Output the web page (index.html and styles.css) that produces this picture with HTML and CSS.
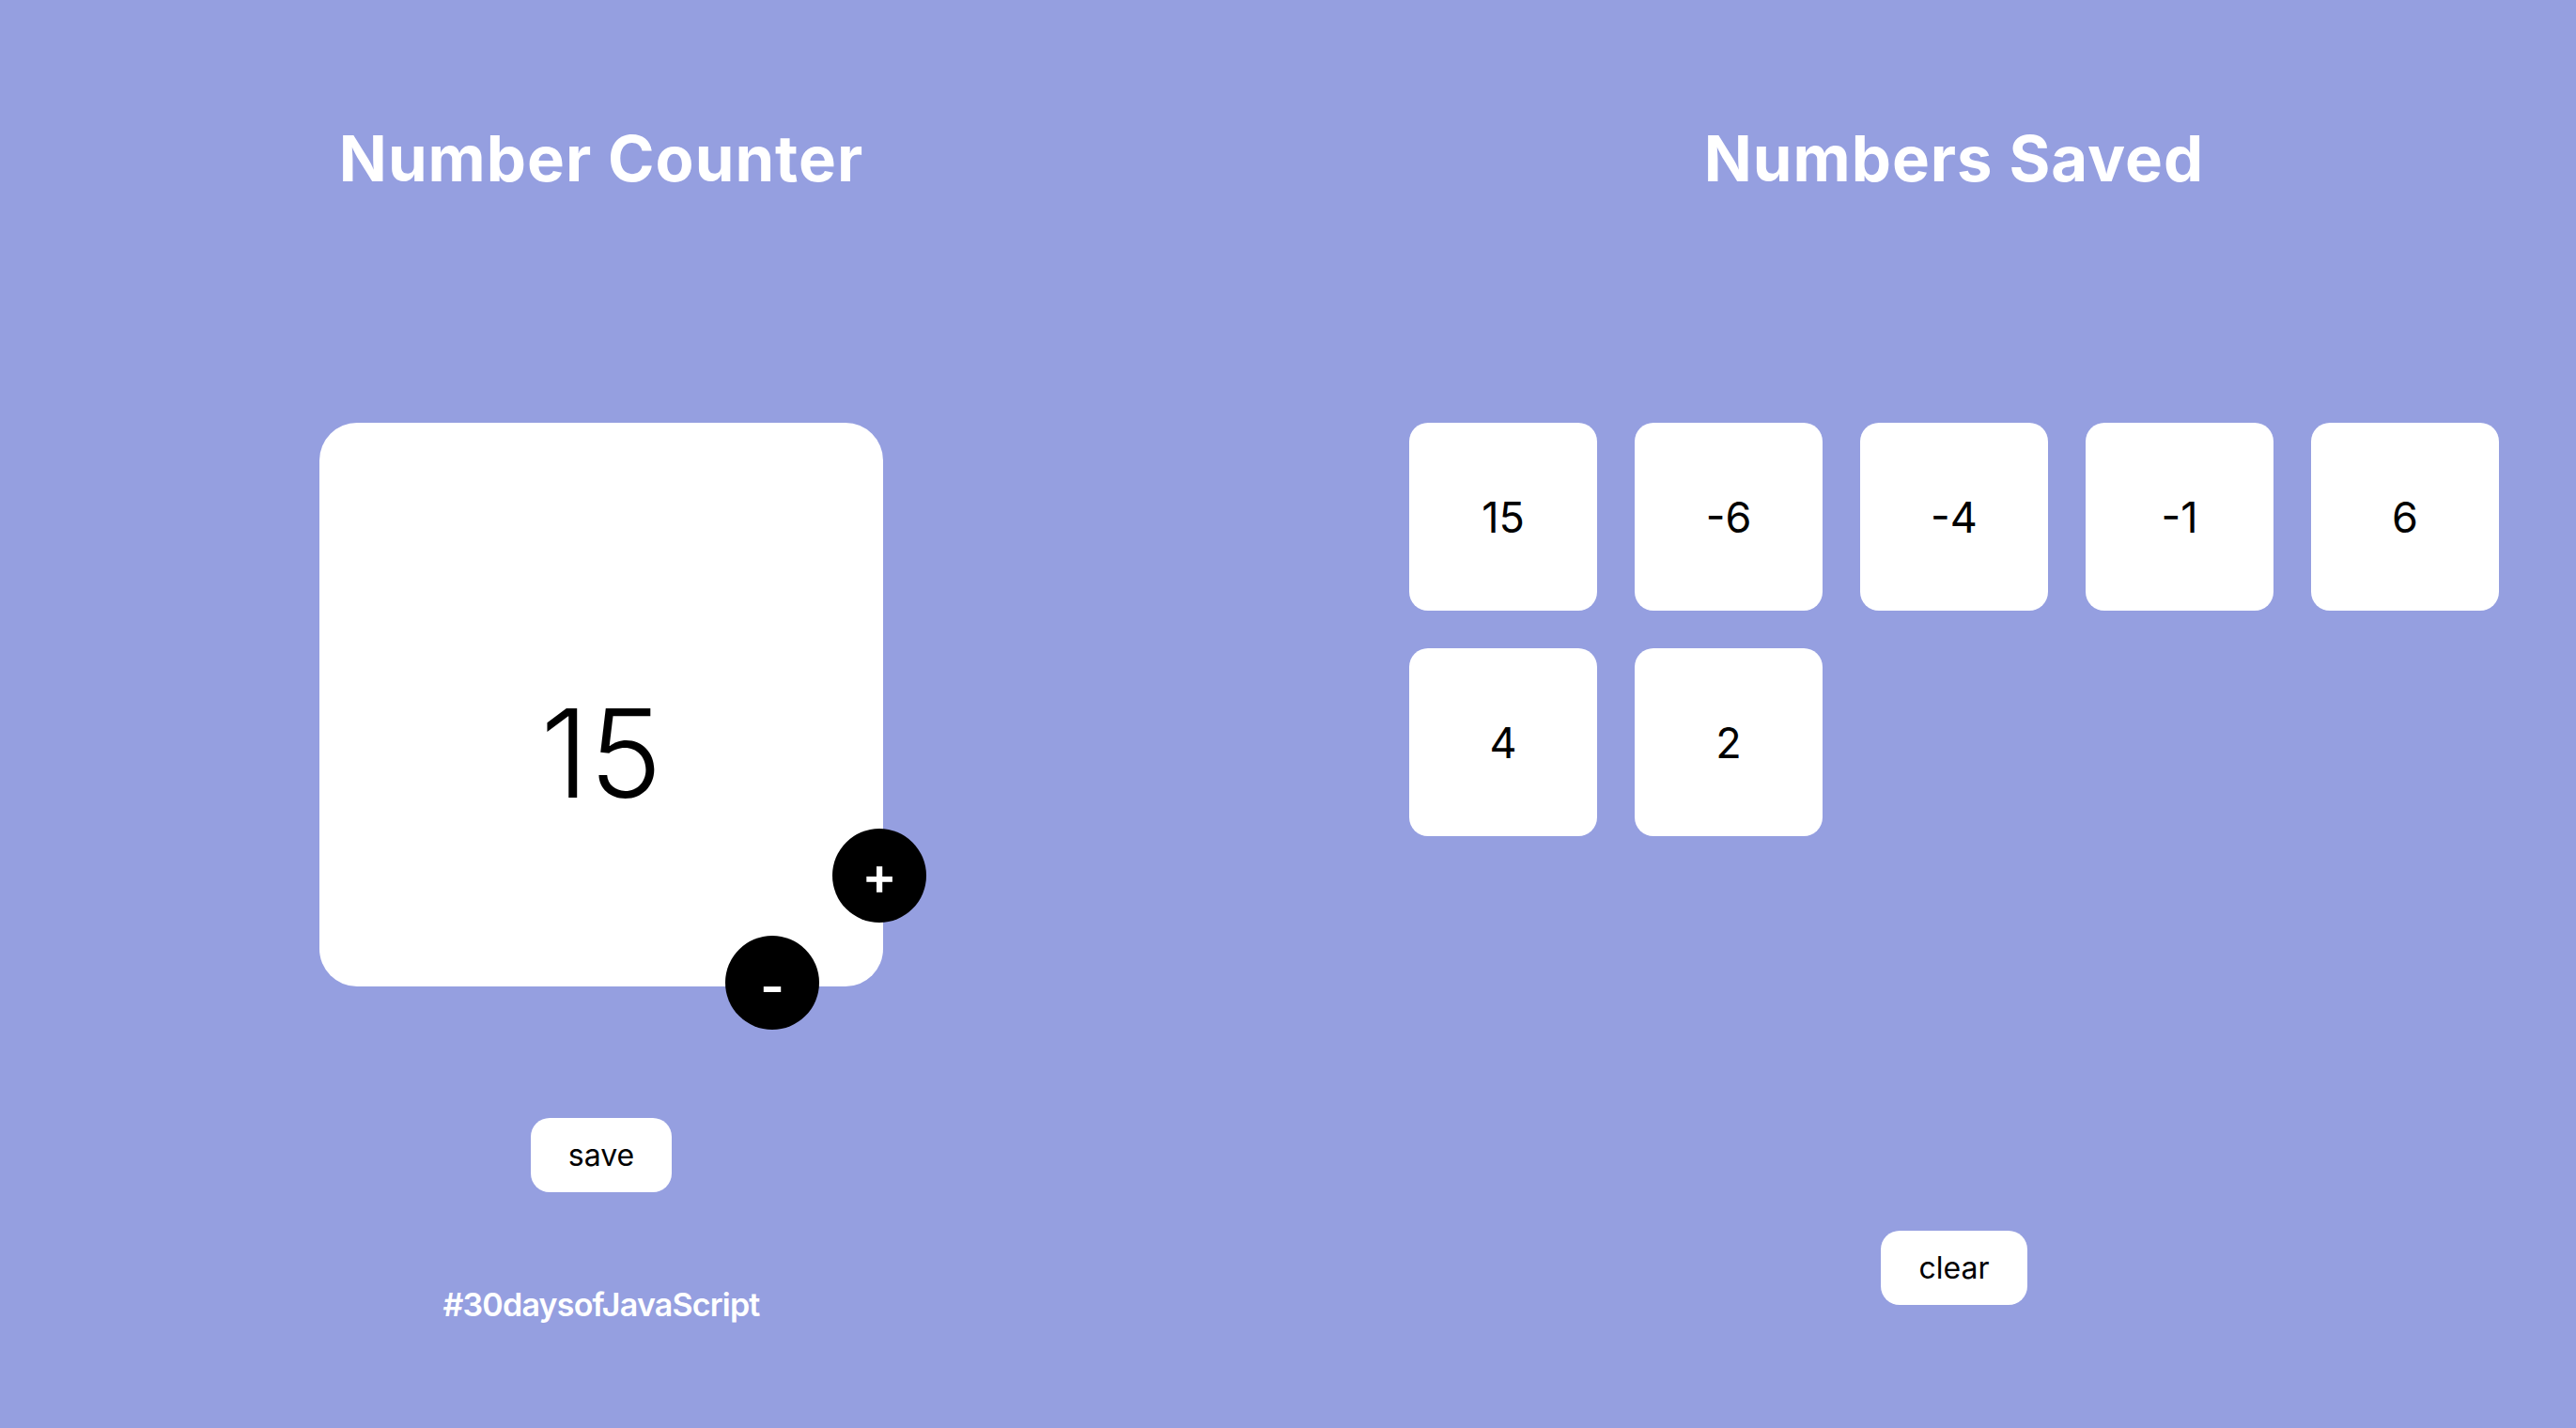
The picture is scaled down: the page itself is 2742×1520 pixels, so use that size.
FILE: index.html
```html
<!DOCTYPE html>
<html lang="en">
<head>
<meta charset="utf-8">
<title>Number Counter</title>
<link rel="stylesheet" href="styles.css">
</head>
<body>
<main class="app">
  <section class="panel">
    <h1 class="title">Number Counter</h1>
    <div class="counter-card">
      <span class="counter-value">15</span>
      <button class="round-btn btn-plus" type="button">+</button>
      <button class="round-btn btn-minus" type="button">-</button>
    </div>
    <button class="pill-btn save-btn" type="button">save</button>
    <p class="tag">#30daysofJavaScript</p>
  </section>
  <section class="panel">
    <h1 class="title">Numbers Saved</h1>
    <div class="saved-grid">
      <div class="tile">15</div>
      <div class="tile">-6</div>
      <div class="tile">-4</div>
      <div class="tile">-1</div>
      <div class="tile">6</div>
      <div class="tile">4</div>
      <div class="tile">2</div>
    </div>
    <button class="pill-btn clear-btn" type="button">clear</button>
  </section>
</main>
</body>
</html>
```
FILE: styles.css
```css
* { box-sizing: border-box; }

html, body {
  margin: 0;
  padding: 0;
}

body {
  background: #959fe0;
  font-family: "Inter", "Noto Sans", sans-serif;
  color: #000;
  min-height: 1520px;
}

.app {
  display: grid;
  grid-template-columns: 1280px 1160px;
  column-gap: 220px;
  padding-top: 129px;
}

.panel {
  display: flex;
  flex-direction: column;
  align-items: center;
}

.title {
  margin: 0;
  font-size: 67px;
  line-height: 80px;
  font-weight: 700;
  letter-spacing: 1px;
  color: #fff;
  white-space: nowrap;
}

.counter-card {
  position: relative;
  margin-top: 241px;
  width: 600px;
  height: 600px;
  background: #fff;
  border-radius: 40px;
  display: flex;
  align-items: center;
  justify-content: center;
  padding-top: 102px;
}

.counter-value {
  font-size: 131px;
  font-weight: 300;
  line-height: normal;
}

.round-btn {
  position: absolute;
  width: 100px;
  height: 100px;
  border: none;
  border-radius: 50%;
  background: #000;
  color: #fff;
  font-family: inherit;
  font-size: 56px;
  font-weight: 600;
  line-height: 1;
  padding: 0;
  display: flex;
  align-items: center;
  justify-content: center;
  cursor: pointer;
}

.btn-plus {
  left: 546px;
  top: 432px;
}

.btn-minus {
  left: 432px;
  top: 546px;
  padding-top: 8px;
}

.pill-btn {
  border: none;
  background: #fff;
  color: #000;
  border-radius: 20px;
  font-family: inherit;
  font-size: 32px;
  font-weight: 400;
  line-height: 39px;
  padding: 20px 40px;
  cursor: pointer;
}

.save-btn {
  margin-top: 140px;
}

.tag {
  margin: 99px 0 0;
  font-size: 34px;
  line-height: 41px;
  font-weight: 600;
  letter-spacing: -0.8px;
  color: #fff;
}

.saved-grid {
  margin-top: 241px;
  display: grid;
  grid-template-columns: repeat(5, 200px);
  grid-auto-rows: 200px;
  gap: 40px;
}

.tile {
  background: #fff;
  border-radius: 20px;
  display: flex;
  align-items: center;
  justify-content: center;
  font-size: 45px;
  font-weight: 400;
}

.clear-btn {
  margin-top: 420px;
}
```
